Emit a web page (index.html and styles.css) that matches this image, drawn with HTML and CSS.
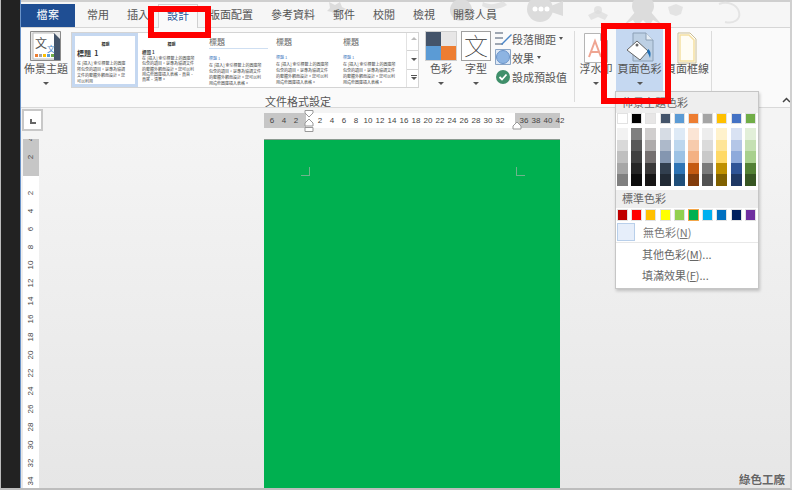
FILE: index.html
```html
<!DOCTYPE html>
<html lang="zh-Hant">
<head>
<meta charset="utf-8" />
<title>頁面色彩</title>
<link rel="stylesheet" href="styles.css">
</head>
<body>
<div class="side"></div>
<div class="window">

	<!-- 頁籤 -->
	<div class="tabs">
		<svg class="decor" width="771" height="27" viewBox="0 0 771 27">
			<g fill="#dcdcdc">
				<path d="M308 2l6 3 5-3 2 5 4 2-4 2 1 3-5-1-3 3-3-4-5-1 3-3z"/>
				<circle cx="440" cy="10" r="11"/>
				<path d="M462 2c6 3 12 3 20-1l4 4c-8 5-18 5-25 1z" opacity=".7"/>
				<circle cx="519" cy="9" r="13"/>
				<path d="M530 6l12-5v15l-12-4z"/>
				<circle cx="577" cy="10" r="4" opacity=".7"/>
				<path d="M567 15l10-5 10 5-3 5-7-3-7 3z" opacity=".7"/>
				<circle cx="622" cy="6" r="11"/>
				<path d="M603 25l12-14h14l12 14-9-5-4 6-6-6-6 6-4-6z"/>
				<path d="M647 7l8-3 7 3-2 7-5 2-6-2z" opacity=".7"/>
				<path d="M698 4c8-3 18 0 20 8s-6 12-14 10" fill="none" stroke="#e4e4e4" stroke-width="2"/>
			</g>
			<g fill="#fff">
				<circle cx="514" cy="9" r="2.500"/>
				<circle cx="520" cy="9" r="2.500"/>
				<circle cx="526" cy="9" r="2.500"/>
			</g>
		</svg>
		<div class="tab-file">檔案</div>
		<div class="tab tab-first">常用</div>
		<div class="tab">插入</div>
		<div class="tab tab-active">設計</div>
		<div class="tab">版面配置</div>
		<div class="tab">參考資料</div>
		<div class="tab">郵件</div>
		<div class="tab">校閱</div>
		<div class="tab">檢視</div>
		<div class="tab">開發人員</div>
	</div>

	<!-- 功能區 -->
	<div class="ribbon">
		<div class="rib-btn btn-theme">
			<svg width="32" height="30" viewBox="0 0 32 30">
				<path d="M.5.5h30v29H.5z" fill="#e8e8e8" stroke="#8a8a8a"/>
				<path d="M3 2h20l6 6v20H3z" fill="#fff" stroke="#bbb"/>
				<path d="M24 2l6 6v21h-6z" fill="#44546a"/>
				<text x="5" y="17" class="ico-txt" font-size="12" fill="#555">文</text>
				<text x="17" y="21" class="ico-txt" font-size="8" fill="#4a86c8">文</text>
				<path d="M5 23h3v3H5z" fill="#ed7d31"/><path d="M9 23h3v3H9z" fill="#a5a5a5"/>
				<path d="M13 23h3v3h-3z" fill="#ffc000"/><path d="M17 23h3v3h-3z" fill="#5b9bd5"/>
				<path d="M21 23h3v3h-3z" fill="#70ad47"/>
			</svg>
			<div class="rib-label">佈景主題</div>
			<div class="caret"></div>
		</div>

		<div class="gallery">
			<div class="thumb thumb-sel">
				<div class="t-title">標題</div>
				<div class="t-head">標題&nbsp; 1</div>
				<p>在 [插入] 索引標籤上的圖庫所包含的項目，是專為協調文件的整體外觀而設計。您可以利用</p>
			</div>
			<div class="thumb">
				<div class="t-title">標題</div>
				<div class="t-head2">標題 1</div>
				<p class="p-tight">在 [插入] 索引標籤上的圖庫所包含的項目，是專為協調文件的整體外觀而設計。您可以利用這些圖庫插入表格、頁首、頁尾、清單。</p>
			</div>
			<div class="thumb">
				<div class="t-big t-line">標題</div>
				<div class="t-blue">標題 1</div>
				<p>在 [插入] 索引標籤上的圖庫所包含的項目，是專為協調文件的整體外觀而設計。您可以利用這些圖庫插入表格。</p>
			</div>
			<div class="thumb">
				<div class="t-big">標題</div>
				<div class="t-blue">標題 1</div>
				<p>在 [插入] 索引標籤上的圖庫所包含的項目，是專為協調文件的整體外觀而設計。您可以利用這些圖庫插入表格。</p>
			</div>
			<div class="thumb">
				<div class="t-big">標題</div>
				<div class="t-blue">標題 1</div>
				<p>在 [插入] 索引標籤上的圖庫所包含的項目，是專為協調文件的整體外觀而設計。您可以利用這些圖庫插入表格。</p>
			</div>
			<div class="g-scroll">
				<div class="g-arrow g-up"></div>
				<div class="g-arrow g-down"></div>
				<div class="g-arrow g-more"></div>
			</div>
		</div>

		<div class="rib-btn btn-color">
			<div class="color-ico">
				<i class="c1"></i><i class="c2"></i><i class="c3"></i><i class="c4"></i>
			</div>
			<div class="rib-label">色彩</div>
			<div class="caret"></div>
		</div>

		<div class="rib-btn btn-font">
			<div class="font-ico">文</div>
			<div class="rib-label">字型</div>
			<div class="caret"></div>
		</div>

		<div class="small-btns">
			<div class="small-btn">
				<svg width="17" height="15" viewBox="0 0 17 15">
					<path d="M0 2h8M0 7h8M0 13h8" stroke="#44546a" stroke-width="1.200"/>
					<path d="M6 13l7-7 3-3 1 1-3 3-7 7z" fill="#4a86c8"/>
				</svg>
				<span>段落間距</span><b class="caret-s"></b>
			</div>
			<div class="small-btn">
				<svg width="17" height="17" viewBox="0 0 17 17">
					<path d="M.5.5h15v15H.5z" fill="#dfe9f6" stroke="#8aa5c6"/>
					<circle cx="8" cy="8" r="6.500" fill="#8db4e2" stroke="#6a93c8"/>
				</svg>
				<span>效果</span><b class="caret-s"></b>
			</div>
			<div class="small-btn">
				<svg width="17" height="16" viewBox="0 0 17 16">
					<circle cx="8" cy="8" r="7" fill="#3f8f6a"/>
					<path d="M4.500 8l2.500 2.500 4.500-5" fill="none" stroke="#fff" stroke-width="1.800"/>
				</svg>
				<span>設成預設值</span>
			</div>
		</div>

		<div class="rib-sep sep-a"></div>

		<div class="rib-btn btn-mark">
			<svg width="26" height="32" viewBox="0 0 26 32">
				<path d="M1.500 1.500h16l7 7v22h-23z" fill="#fff" stroke="#b5b5b5"/>
				<path d="M17.500 1.500v7h7" fill="#eee" stroke="#b5b5b5"/>
				<path d="M6 25l6-16 6 16M8 20h8" fill="none" stroke="#efa592" stroke-width="2"/>
			</svg>
			<div class="rib-label">浮水印</div>
			<div class="caret"></div>
		</div>

		<div class="rib-btn btn-page">
			<svg width="30" height="32" viewBox="0 0 30 32">
				<path d="M8 1h13l7 7v21H8z" fill="#bdd0e4" stroke="#8ca0b6"/>
				<path d="M21 1v7h7" fill="#e6eef6" stroke="#8ca0b6"/>
				<path d="M12 9l11 10-8 9L2 18z" fill="#fff" stroke="#666"/>
				<circle cx="12" cy="13" r="1.500" fill="#666"/>
				<path d="M23 17c3 2 3 5 2 9-1-3-2-5-3-6z" fill="#1f6fb5"/>
			</svg>
			<div class="rib-label">頁面色彩</div>
			<div class="caret"></div>
		</div>

		<div class="rib-btn btn-border">
			<svg width="20" height="32" viewBox="0 0 20 32">
				<path d="M1 1h12l6 6v24H1z" fill="#fff" stroke="#c9bd95"/>
				<path d="M3 3h9l5 5v21H3z" fill="#fffdf4" stroke="#f5dfa0" stroke-width="1.500"/>
			</svg>
			<div class="rib-label">頁面框線</div>
		</div>

		<div class="rib-sep sep-b"></div>
		<div class="rib-group">文件格式設定</div>
		<svg class="collapse" width="9" height="6" viewBox="0 0 9 6"><path d="M1 5l3.500-3.500L8 5" fill="none" stroke="#444" stroke-width="1.500"/></svg>
	</div>

	<!-- 水平尺規 -->
	<div class="hruler-row">
		<div class="corner"><i></i></div>
		<div class="hruler">
			<span>6</span><span>4</span><span>2</span><span></span><span>2</span><span>4</span><span>6</span><span>8</span><span>10</span><span>12</span><span>14</span><span>16</span><span>18</span><span>20</span><span>22</span><span>24</span><span>26</span><span>28</span><span>30</span><span>32</span><span></span><span>36</span><span>38</span><span>40</span><span>42</span>
			<svg class="marker m-left" width="10" height="24" viewBox="0 0 10 24">
				<path d="M1 .5h8V3L5 7 1 3z" fill="#fff" stroke="#999"/>
				<path d="M5 9l4 4v3H1v-3z" fill="#fff" stroke="#999"/>
				<path d="M1 17.500h8v4H1z" fill="#fff" stroke="#999"/>
			</svg>
			<svg class="marker m-right" width="10" height="9" viewBox="0 0 10 9">
				<path d="M5 1l4 4v3H1V5z" fill="#fff" stroke="#999"/>
			</svg>
		</div>
	</div>

	<!-- 文件區 -->
	<div class="work">
		<div class="vruler">
			<div class="vscale">
				<span>4</span><span>2</span><span></span><span>2</span><span>4</span><span>6</span><span>8</span><span>10</span><span>12</span><span>14</span><span>16</span><span>18</span><span>20</span><span>22</span><span>24</span><span>26</span><span>28</span><span>30</span><span>32</span><span>34</span>
			</div>
		</div>
		<div class="page">
			<i class="crop crop-l"></i>
			<i class="crop crop-r"></i>
		</div>
	</div>
</div>

<!-- 頁面色彩選單 -->
<div class="menu">
	<div class="menu-head">佈景主題色彩</div>
	<div class="swatches sw-top">
		<i style="background:#ffffff"></i><i style="background:#000000"></i><i style="background:#e7e6e6"></i><i style="background:#44546a"></i><i style="background:#5b9bd5"></i><i style="background:#ed7d31"></i><i style="background:#a5a5a5"></i><i style="background:#ffc000"></i><i style="background:#4472c4"></i><i style="background:#70ad47"></i>
	</div>
	<div class="shades">
		<div><i style="background:#f2f2f2"></i><i style="background:#d9d9d9"></i><i style="background:#bfbfbf"></i><i style="background:#a6a6a6"></i><i style="background:#808080"></i></div>
		<div><i style="background:#7f7f7f"></i><i style="background:#595959"></i><i style="background:#404040"></i><i style="background:#262626"></i><i style="background:#0d0d0d"></i></div>
		<div><i style="background:#d0cece"></i><i style="background:#aeabab"></i><i style="background:#757070"></i><i style="background:#3a3838"></i><i style="background:#171616"></i></div>
		<div><i style="background:#d6dce4"></i><i style="background:#adb9ca"></i><i style="background:#8496b0"></i><i style="background:#323f4f"></i><i style="background:#222a35"></i></div>
		<div><i style="background:#deeaf6"></i><i style="background:#bdd7ee"></i><i style="background:#9cc2e5"></i><i style="background:#2e74b5"></i><i style="background:#1f4e79"></i></div>
		<div><i style="background:#fbe5d5"></i><i style="background:#f7cbac"></i><i style="background:#f4b183"></i><i style="background:#c55a11"></i><i style="background:#833c0b"></i></div>
		<div><i style="background:#ededed"></i><i style="background:#dbdbdb"></i><i style="background:#c9c9c9"></i><i style="background:#7b7b7b"></i><i style="background:#525252"></i></div>
		<div><i style="background:#fff2cc"></i><i style="background:#fee599"></i><i style="background:#ffd966"></i><i style="background:#bf9000"></i><i style="background:#7f6000"></i></div>
		<div><i style="background:#d9e2f3"></i><i style="background:#b4c6e7"></i><i style="background:#8eaadb"></i><i style="background:#2f5496"></i><i style="background:#1f3864"></i></div>
		<div><i style="background:#e2efd9"></i><i style="background:#c5e0b3"></i><i style="background:#a8d08d"></i><i style="background:#538135"></i><i style="background:#375623"></i></div>
	</div>
	<div class="menu-head menu-head2">標準色彩</div>
	<div class="swatches sw-std">
		<i style="background:#c00000"></i><i style="background:#ff0000"></i><i style="background:#ffc000"></i><i style="background:#ffff00"></i><i style="background:#92d050"></i><i class="sw-on" style="background:#00b050"></i><i style="background:#00b0f0"></i><i style="background:#0070c0"></i><i style="background:#002060"></i><i style="background:#7030a0"></i>
	</div>
	<div class="menu-nocolor"><i></i><span>無色彩(<u>N</u>)</span></div>
	<div class="menu-item">其他色彩(<u>M</u>)...</div>
	<div class="menu-item">填滿效果(<u>F</u>)...</div>
</div>

<!-- 標示紅框 -->
<div class="redbox red-tab"></div>
<div class="redbox red-page"></div>

<div class="stamp">綠色工廠</div>
</body>
</html>
```

FILE: styles.css
```css
/*清除默認格式*/
*{
margin:0;
padding:0;
box-sizing:border-box;
}
html,body{
width:792px;
height:490px;
overflow:hidden;
}
body{
display:flex;
position:relative;
background:#e8e8e8;
font-family:"Noto Sans CJK TC","Liberation Sans",sans-serif;
color:#555;
border-bottom:2px solid #bdbdbd;
border-right:2px solid #d0d0d0;
}
i{
display:block;
font-style:normal;
}
.side{
width:21px;
flex:none;
background:#222;
border-left:1px solid #bbb;
border-right:1px solid #6a93c8;
}
.window{
flex:1;
min-width:0;
display:flex;
flex-direction:column;
}

/*頁籤*/
.tabs{
height:27px;
flex:none;
display:flex;
align-items:flex-end;
position:relative;
background:#f6f6f6;
border-top:2px solid #cfcfcf;
}
.decor{
position:absolute;
left:0;
top:-2px;
}
.tab-file{
width:54px;
height:23px;
background:#1f4e93;
color:#fff;
font-size:11px;
letter-spacing:.4px;
line-height:21px;
text-align:center;
position:relative;
}
.tab{
height:23px;
padding:0 9px;
font-size:11px;
line-height:21px;
position:relative;
}
.tab-first{
margin-left:3px;
}
.tab-active{
width:40px;
height:24px;
margin:0 2px -1px 0;
padding:0;
text-align:center;
color:#2b579a;
background:#fafafa;
border:1px solid #d0d0d0;
border-bottom:none;
z-index:1;
}

/*功能區*/
.ribbon{
height:81px;
flex:none;
display:flex;
position:relative;
background:#fafafa;
border-top:1px solid #d6d6d6;
border-bottom:1px solid #d9d9d9;
padding-top:3px;
}
.rib-btn{
display:flex;
flex-direction:column;
align-items:center;
flex:none;
}
.rib-label{
font-size:11px;
line-height:12px;
white-space:nowrap;
}
.ico-txt{
font-family:"Noto Sans CJK TC",sans-serif;
}
.caret{
width:0;
height:0;
border:3px solid transparent;
border-top:3px solid #555;
border-bottom:none;
margin-top:8px;
}
.btn-theme{
width:50px;
}
.btn-theme .rib-label{
margin-top:1px;
}
.gallery{
width:348px;
height:56px;
flex:none;
display:flex;
background:#fff;
border:1px solid #d4d4d4;
margin-top:1px;
}
.thumb{
width:67px;
flex:none;
padding:0 10px 0 4px;
overflow:hidden;
color:#444;
}
.thumb p{
font-size:4px;
line-height:6px;
margin-top:1px;
}
.thumb .p-tight{
line-height:5.300px;
margin-top:0;
}
.thumb-sel{
border:3px solid #c5d8f1;
padding:0 7px 0 2px;
width:66px;
}
.t-title{
font-size:4px;
font-weight:bold;
line-height:8px;
margin-top:7px;
margin-right:-6px;
text-align:center;
color:#222;
}
.thumb-sel .t-title{
margin-top:4px;
}
.t-head{
font-size:7px;
font-weight:bold;
line-height:11px;
color:#333;
}
.t-head2{
font-size:4.500px;
font-weight:bold;
line-height:7px;
margin-top:1px;
}
.t-big{
font-size:8px;
line-height:12px;
color:#666;
margin:3px -6px 0 0;
}
.t-line{
border-bottom:1px solid #cfdff2;
}
.t-blue{
font-size:4px;
line-height:6px;
margin-top:6px;
color:#4a7ec2;
}
.g-scroll{
flex:1;
display:flex;
flex-direction:column;
border-left:1px solid #e2e2e2;
}
.g-arrow{
flex:1;
position:relative;
border-bottom:1px solid #d4d4d4;
}
.g-arrow:after{
content:"";
position:absolute;
left:4px;
top:7px;
border:3px solid transparent;
border-top:3px solid #555;
}
.g-up:after{
top:4px;
border-top:none;
border-bottom:3px solid #bbb;
}
.g-more{
border-bottom:none;
}
.g-more:before{
content:"";
position:absolute;
left:4px;
top:5px;
width:6px;
border-top:1px solid #555;
}
.btn-color{
width:32px;
margin-left:6px;
}
.color-ico{
width:32px;
height:30px;
display:grid;
grid-template-columns:1fr 1fr;
grid-template-rows:1fr 1fr;
border:1px solid #d0d0d0;
}
.c1{background:#44546a;}
.c2{background:#e7e6e6;}
.c3{background:#5b9bd5;}
.c4{background:#ed7d31;}
.color-ico + .rib-label{
margin-top:1px;
}
.btn-font{
width:30px;
margin-left:4px;
}
.font-ico{
width:30px;
height:30px;
font-size:24px;
font-weight:100;
line-height:26px;
text-align:center;
color:#333;
background:#fff;
border:1px solid #a0a0a0;
overflow:hidden;
}
.font-ico + .rib-label{
margin-top:1px;
}
.small-btns{
flex:none;
margin-left:4px;
width:80px;
display:flex;
flex-direction:column;
gap:2px;
margin-top:-1px;
}
.small-btn{
display:flex;
align-items:center;
height:17px;
font-size:11px;
white-space:nowrap;
}
.small-btn svg{
flex:none;
}
.caret-s{
margin-left:3px;
border:2.500px solid transparent;
border-top:3px solid #555;
border-bottom:none;
}
.rib-sep{
width:1px;
height:71px;
flex:none;
background:#dcdcdc;
}
.sep-a{
margin-left:-1px;
}
.btn-mark{
width:36px;
margin-left:3px;
}
.btn-mark svg,.btn-page svg,.btn-border svg{
margin:1px 0 -2px;
}
.btn-page{
width:47px;
height:63px;
margin:-3px 0 0 2px;
padding-top:3px;
background:#c5d8f1;
}
.btn-border{
width:48px;
}
.rib-group{
position:absolute;
left:244px;
top:66px;
font-size:11px;
line-height:14px;
}
.collapse{
position:absolute;
left:761px;
top:69px;
}

/*水平尺規*/
.hruler-row{
height:31px;
flex:none;
display:flex;
background:#f4f4f4;
}
.corner{
width:21px;
height:22px;
margin:1px 0 0 1px;
background:#fff;
border:2px solid #c8c8c8;
position:relative;
flex:none;
}
.corner i{
position:absolute;
left:6px;
top:8px;
width:6px;
height:5px;
border-left:2px solid #666;
border-bottom:2px solid #666;
}
.hruler{
width:296px;
height:15px;
margin:5px 0 0 221px;
padding-left:2px;
display:flex;
position:relative;
flex:none;
background:linear-gradient(to right,#c6c6c6 42px,#fff 42px,#fff 251px,#c6c6c6 251px);
}
.hruler span{
width:12px;
flex:none;
font-size:8px;
line-height:15px;
text-align:center;
color:#444;
font-family:"Liberation Sans",sans-serif;
}
.marker{
position:absolute;
}
.m-left{
left:40px;
top:-3px;
}
.m-right{
left:248px;
top:8px;
}

/*文件區*/
.work{
flex:1;
min-height:0;
display:flex;
overflow:hidden;
background:linear-gradient(to bottom,#f4f4f4,#e6e6e6);
}
.vruler{
width:16px;
margin-left:2px;
flex:none;
overflow:hidden;
background:linear-gradient(to bottom,#c6c6c6 38px,#fff 38px);
margin-top:-1px;
}
.vscale{
margin-top:-8px;
}
.vscale span{
display:block;
height:18px;
font-size:8px;
line-height:18px;
text-align:center;
color:#444;
font-family:"Liberation Sans",sans-serif;
transform:rotate(-90deg);
}
.page{
width:296px;
margin-left:225px;
flex:none;
background:#00b050;
border-top:1px solid #8a9a90;
position:relative;
}
.crop{
position:absolute;
top:27px;
width:9px;
height:9px;
}
.crop-l{
left:37px;
border-right:1px solid #6fb38c;
border-bottom:1px solid #6fb38c;
}
.crop-r{
left:252px;
border-left:1px solid #6fb38c;
border-bottom:1px solid #6fb38c;
}

/*頁面色彩選單*/
.menu{
position:absolute;
left:615px;
top:91px;
width:144px;
height:198px;
background:#fff;
border:1px solid #c6c6c6;
box-shadow:1px 2px 3px rgba(0,0,0,.2);
z-index:2;
}
.menu-head{
height:21px;
background:#eee;
font-size:11px;
line-height:21px;
padding-left:6px;
color:#666;
}
.menu-head2{
height:18px;
line-height:17px;
margin-top:4px;
}
.swatches{
display:grid;
grid-template-columns:repeat(10,11px);
column-gap:3.200px;
padding-left:1px;
}
.swatches i{
height:11px;
border:1px solid #e2e2e2;
}
.sw-std{
margin-top:1px;
}
.sw-std i{
height:12px;
}
.sw-on{
border:1px solid #f2a64a !important;
}
.shades{
display:grid;
grid-template-columns:repeat(10,11px);
column-gap:3.200px;
padding-left:1px;
margin-top:4px;
}
.shades i{
height:11.600px;
}
.menu-nocolor{
display:flex;
align-items:center;
height:21px;
margin-top:1px;
padding-left:1px;
font-size:11px;
border-bottom:1px solid #e8e8e8;
color:#777;
}
.menu-nocolor i{
width:18px;
height:18px;
background:#e6eefa;
border:1px solid #b8cfea;
margin-right:8px;
}
.menu-item{
height:21px;
padding-left:26px;
font-size:11px;
line-height:22px;
color:#666;
}

/*紅框*/
.redbox{
position:absolute;
border:6px solid #f00;
z-index:3;
}
.red-tab{
left:148px;
top:6px;
width:63px;
height:32px;
}
.red-page{
left:601px;
top:23px;
width:70px;
height:81px;
}
.stamp{
position:absolute;
left:739px;
top:471px;
font-size:11.500px;
line-height:16px;
font-weight:bold;
color:#666;
white-space:nowrap;
text-shadow:0 0 1px #fff;
z-index:3;
}
```
